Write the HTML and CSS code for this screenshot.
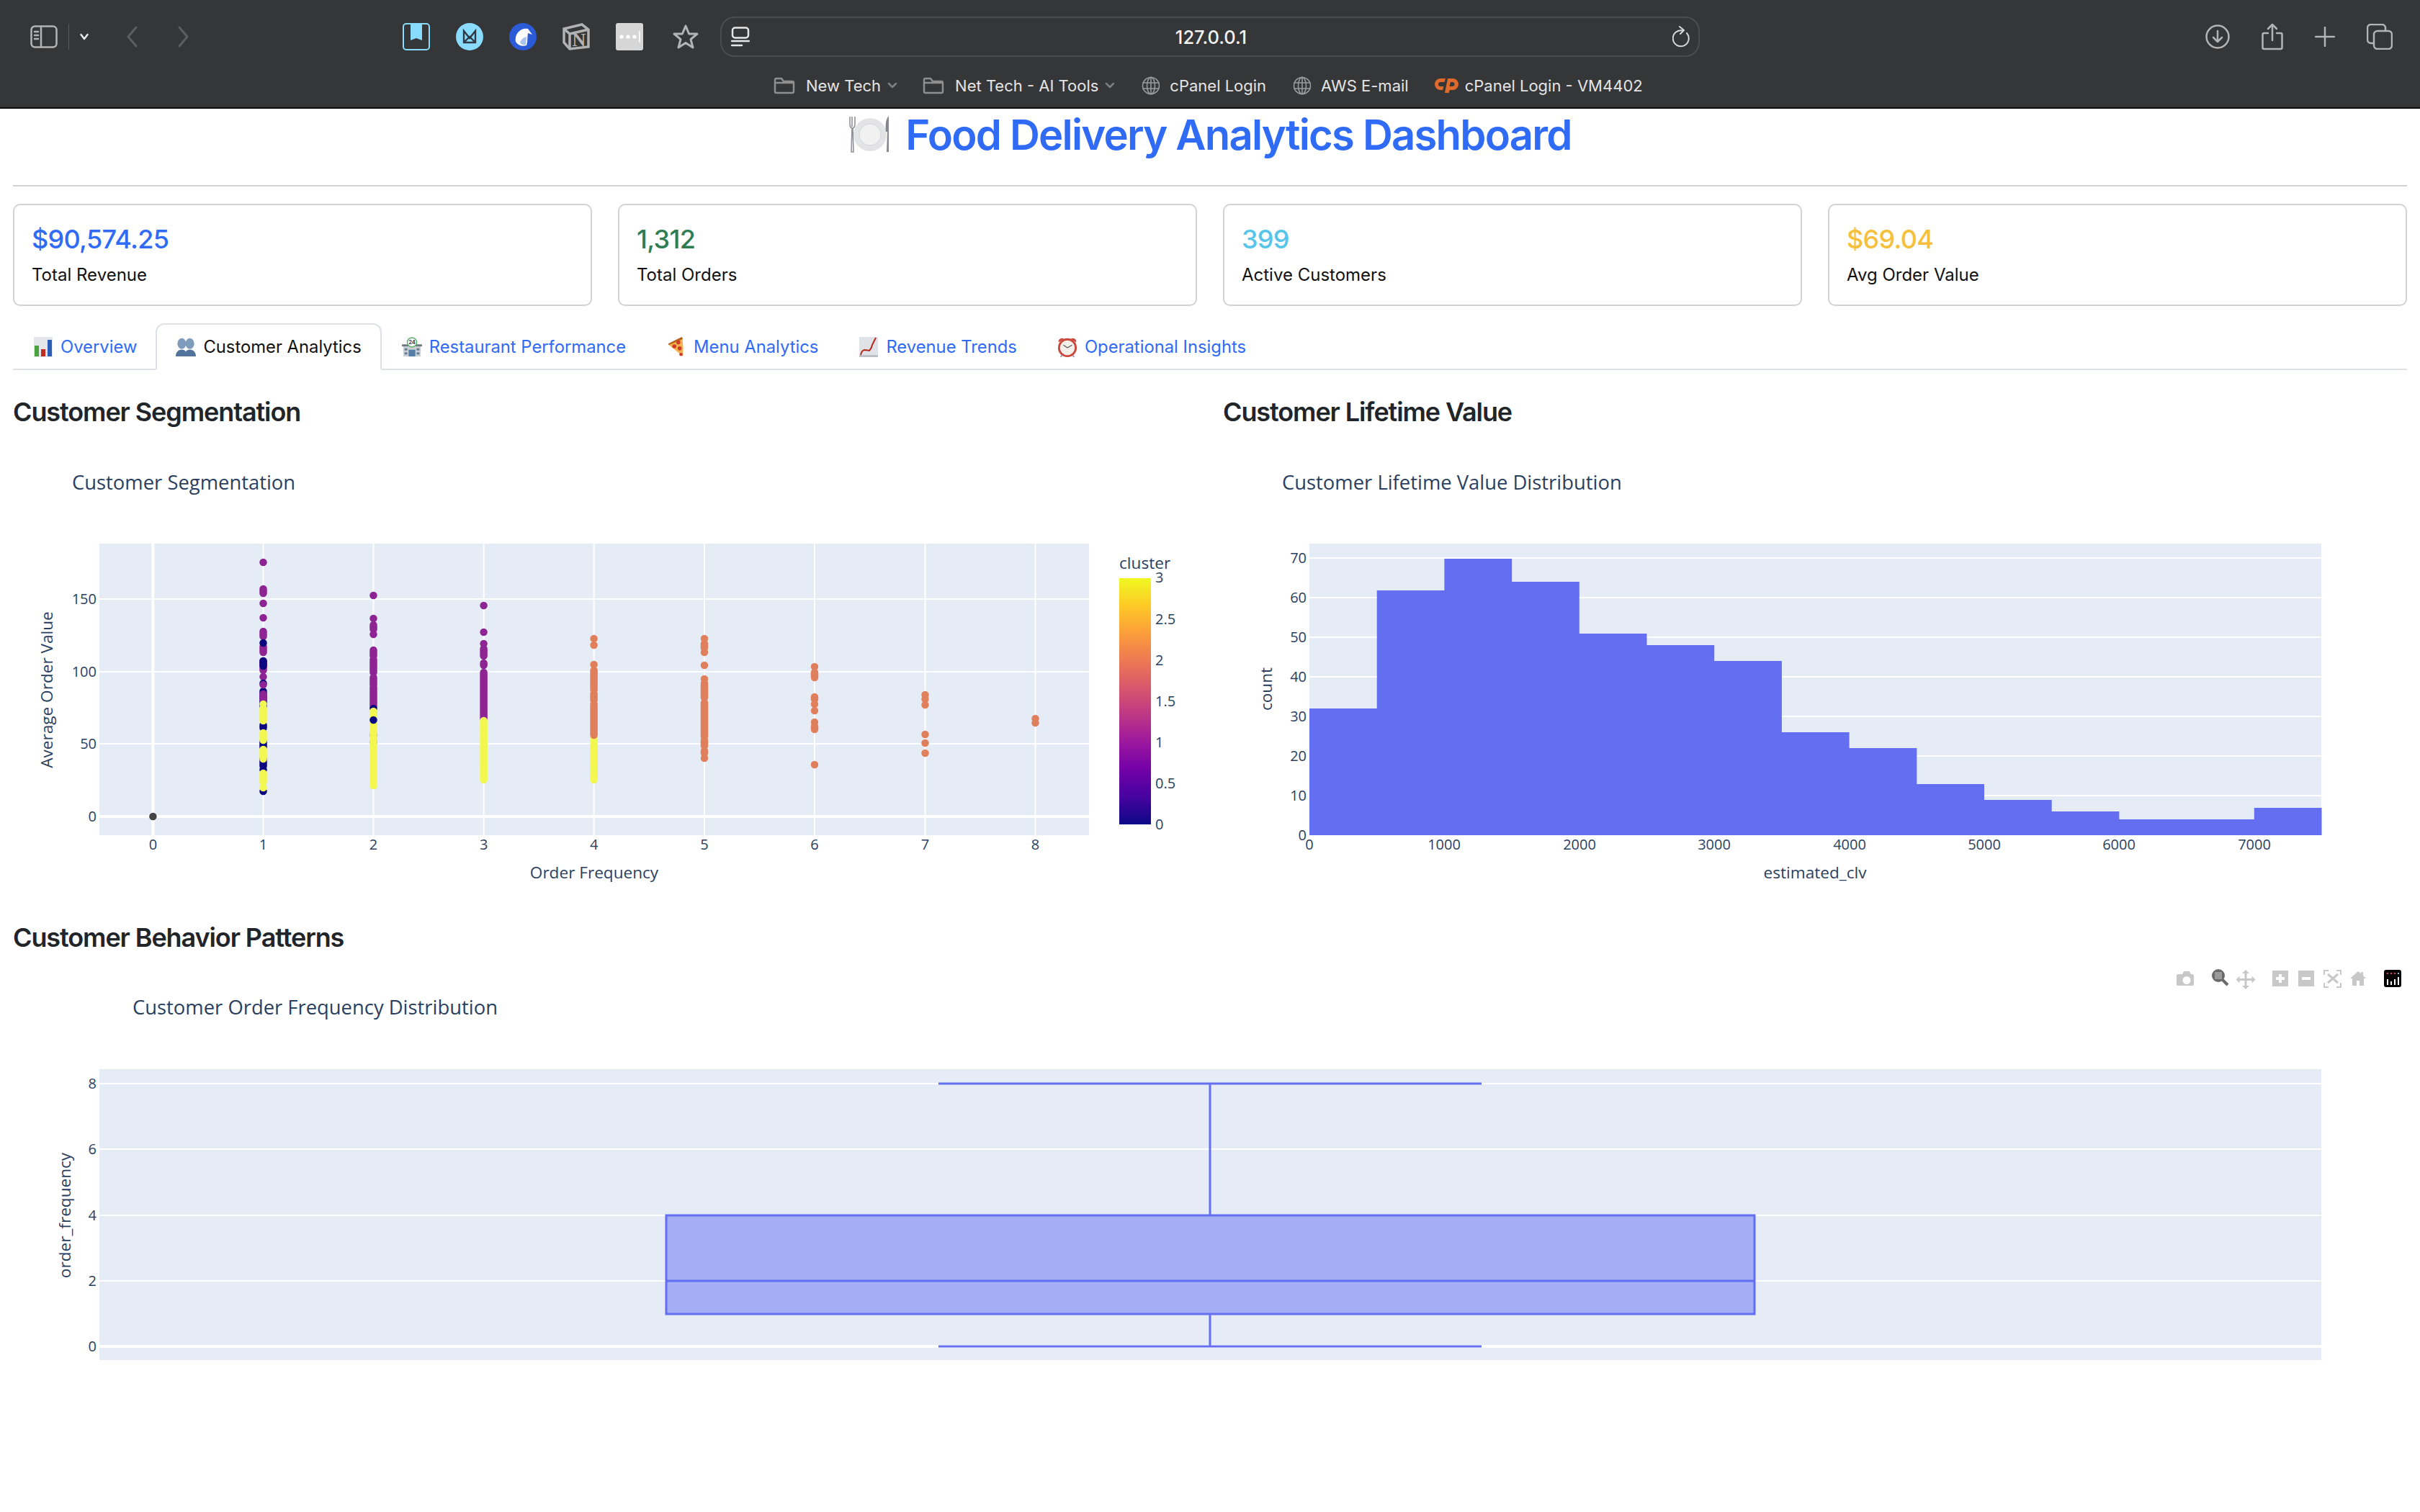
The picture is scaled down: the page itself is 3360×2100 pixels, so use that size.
FILE: index.html

```html
<!DOCTYPE html>
<html lang="en">
<head>
  <meta charset="UTF-8">
  <title>Food Delivery Analytics Dashboard</title>
  <link rel="stylesheet" href="styles.css">
</head>
<body>
  <header class="toolbar">
    <div class="tb-row">
      <div class="tb-left">
        <svg class="ic sidebar-ic" width="38" height="32" viewBox="0 0 38 32"><rect x="1.5" y="1.5" width="35" height="29" rx="5"/><path d="M15 2v28M6 9h5M6 14h5M6 19h5"/></svg>
        <span class="tb-divider"></span>
        <svg class="ic chev-down" width="12" height="10" viewBox="0 0 12 10"><path d="M1.5 2 6 8l4.5-6"/></svg>
        <svg class="ic nav-back" width="16" height="30" viewBox="0 0 16 30"><path d="M14 2 3 15l11 13"/></svg>
        <svg class="ic nav-fwd" width="16" height="30" viewBox="0 0 16 30"><path d="m2 2 11 13L2 28"/></svg>
        <svg class="ext ext-first" width="38" height="38" viewBox="0 0 38 38"><rect x="1" y="1" width="36" height="36" rx="4" fill="none" stroke="#8adcff" stroke-width="2"/><path d="M11 1h16v23l-8-3-8 3z" fill="#8adcff"/></svg>
        <svg class="ext" width="38" height="38" viewBox="0 0 38 38"><circle cx="19" cy="19" r="19" fill="#8adcff"/><path d="M11 11v16h16V11L19 21z M11 27l8-8 8 8" fill="none" stroke="#2f3a46" stroke-width="2.4"/></svg>
        <svg class="ext" width="38" height="38" viewBox="0 0 38 38"><circle cx="19" cy="19" r="19" fill="#2c5bd8"/><path d="M9 26C7 14 17 6 26 8l6 8-6-2c-1 6 0 11-2 17-6 2-12 0-15-5z" fill="#fff"/><path d="M15 27c2-5 5-7 9-8l-1 11c-3 1-6 0-8-3z" fill="#a9c3ee"/></svg>
        <svg class="ext" width="38" height="38" viewBox="0 0 38 38"><path d="M2 8 27 2l9 7v24l-26 3-8-9z" fill="none" stroke="#b2b2b2" stroke-width="3.500"/><path d="M2 8l8 7 26-6M10 15v21" fill="none" stroke="#b2b2b2" stroke-width="3.500"/><text class="notion-n" x="23" y="32" text-anchor="middle">N</text></svg>
        <svg class="ext" width="38" height="38" viewBox="0 0 38 38"><rect width="38" height="38" rx="3" fill="#d6d6d6"/><circle cx="8" cy="19" r="2.6" fill="#fff"/><circle cx="17" cy="19" r="2.6" fill="#fff"/><circle cx="26" cy="19" r="2.6" fill="#fff"/><rect x="32" y="11" width="1.6" height="16" fill="#fff"/></svg>
        <svg class="ic star-ic" width="38" height="36" viewBox="0 0 38 36"><path d="m19 3 4.6 11H35l-9 7.6L29 33l-10-6.500L9 33l3-11.400L3 14h11.400z"/></svg>
      </div>
      <div class="urlbar">
        <svg class="ic site-ic" width="26" height="28" viewBox="0 0 26 28"><rect x="2" y="1.500" width="22" height="14" rx="3.500"/><path d="M1 20h24M1 26h14"/></svg>
        <span class="url-text">127.0.0.1</span>
        <svg class="ic reload-ic" width="26" height="30" viewBox="0 0 26 30"><path d="M20 10a11 11 0 1 1-6-3.500M10 1l6 5-5 5"/></svg>
      </div>
      <div class="tb-right">
        <svg class="ic" width="34" height="34" viewBox="0 0 34 34"><circle cx="17" cy="17" r="15.500"/><path d="M17 9v15M11 18l6 6 6-6"/></svg>
        <svg class="ic share-ic" width="30" height="38" viewBox="0 0 30 38"><path d="M9 14H3.500a2 2 0 0 0-2 2v18a2 2 0 0 0 2 2h23a2 2 0 0 0 2-2V16a2 2 0 0 0-2-2H21M15 24V2M9 8l6-6 6 6"/></svg>
        <svg class="ic plus-ic" width="28" height="28" viewBox="0 0 28 28"><path d="M14 1v26M1 14h26"/></svg>
        <svg class="ic tabs-ic" width="36" height="36" viewBox="0 0 36 36"><rect x="10" y="10" width="25" height="25" rx="5"/><path d="M10 27H6a5 5 0 0 1-5-5V6a5 5 0 0 1 5-5h15a5 5 0 0 1 5 5v4"/></svg>
      </div>
    </div>
    <div class="tb-row bm-row">
      <svg class="apps-ic" width="23" height="18" viewBox="0 0 23 18"><path d="M2 2h0M8.300 2h0M14.600 2h0M21 2h0M2 9h0M8.300 9h0M14.600 9h0M21 9h0M2 16h0M8.300 16h0M14.600 16h0M21 16h0"/></svg>
      <nav class="bookmarks">
        <a class="bm bm-folder bm-first"><svg class="ic" width="30" height="24" viewBox="0 0 30 24"><path d="M2 7V4a2 2 0 0 1 2-2h7l3 4h12a2 2 0 0 1 2 2v12a2 2 0 0 1-2 2H4a2 2 0 0 1-2-2zM2 8h26"/></svg>New Tech<svg class="ic bm-chev" width="14" height="8" viewBox="0 0 14 8"><path d="m2 1 5 5 5-5"/></svg></a>
        <a class="bm bm-folder"><svg class="ic" width="30" height="24" viewBox="0 0 30 24"><path d="M2 7V4a2 2 0 0 1 2-2h7l3 4h12a2 2 0 0 1 2 2v12a2 2 0 0 1-2 2H4a2 2 0 0 1-2-2zM2 8h26"/></svg>Net Tech - AI Tools<svg class="ic bm-chev" width="14" height="8" viewBox="0 0 14 8"><path d="m2 1 5 5 5-5"/></svg></a>
        <a class="bm"><svg class="ic globe-ic" width="26" height="26" viewBox="0 0 26 26"><circle cx="13" cy="13" r="11.500"/><ellipse cx="13" cy="13" rx="5.500" ry="11.500"/><path d="M2 9h22M2 17h22M13 1v24"/></svg>cPanel Login</a>
        <a class="bm"><svg class="ic globe-ic" width="26" height="26" viewBox="0 0 26 26"><circle cx="13" cy="13" r="11.500"/><ellipse cx="13" cy="13" rx="5.500" ry="11.500"/><path d="M2 9h22M2 17h22M13 1v24"/></svg>AWS E-mail</a>
        <a class="bm bm-cp"><svg width="34" height="24" viewBox="0 0 34 24"><path d="M16 2H9a8 8 0 0 0 0 16h3l1.500-5H9a3 3 0 0 1 0-6h5.500zM19 2h7a8 8 0 0 1 0 16h-4l-1.500 4H15zm4 5-1.500 6h4a3 3 0 0 0 0-6z" fill="#de6a2b" fill-rule="evenodd"/></svg>cPanel Login - VM4402</a>
      </nav>
    </div>
  </header>

  <main class="page">
    <h1 class="page-title">
      <svg width="60" height="54" viewBox="0 0 60 54"><circle cx="30" cy="27" r="23" fill="#e4e4e6"/><circle cx="30" cy="27" r="15" fill="#f1f1f2" stroke="#d2d5da"/><path d="M5 2v14M2 2v10q0 5 3 6l-1 33h3l-1-33q3-1 3-6V2" fill="none" stroke="#8f9296" stroke-width="1.600"/><path d="M56 1c-4 4-5 12-4 22h2l-1 28h3z" fill="#85888c"/></svg>
      <span>Food Delivery Analytics Dashboard</span>
    </h1>
    <hr class="rule">

    <section class="cards">
      <div class="card"><div class="card-value text-blue">$90,574.25</div><div class="card-label">Total Revenue</div></div>
      <div class="card"><div class="card-value text-green">1,312</div><div class="card-label">Total Orders</div></div>
      <div class="card"><div class="card-value text-cyan">399</div><div class="card-label">Active Customers</div></div>
      <div class="card"><div class="card-value text-yellow">$69.04</div><div class="card-label">Avg Order Value</div></div>
    </section>

    <ul class="tabs">
      <li class="tab tab-first">
        <svg class="emoji" viewBox="0 0 26 30"><rect y="1" width="26" height="28" fill="#e4e6ea"/><rect x="1" y="13" width="6" height="15" fill="#4ba23f"/><rect x="10" y="18" width="6" height="10" fill="#c22b20"/><rect x="19" y="5" width="6" height="23" fill="#2a5fb5"/></svg>
        Overview
      </li>
      <li class="tab active">
        <svg class="emoji" viewBox="0 0 30 30"><g fill="#7f9cbd"><ellipse cx="9" cy="10" rx="6.500" ry="8"/><ellipse cx="21" cy="10" rx="6.500" ry="8"/></g><path d="M0 29c0-6 3-9 7-10h4c3 1 4 2 4 4 0-2 1-3 4-4h4c4 1 7 4 7 10z" fill="#52749c"/></svg>
        Customer Analytics
      </li>
      <li class="tab">
        <svg class="emoji" viewBox="0 0 30 30"><rect x="2" y="13" width="26" height="16" fill="#c9cfd3"/><rect x="0" y="11" width="30" height="3" fill="#6f7a80"/><rect x="10" y="19" width="10" height="10" fill="#557fa8"/><rect x="4" y="17" width="4" height="3" fill="#5d7a92"/><rect x="22" y="17" width="4" height="3" fill="#5d7a92"/><rect x="4" y="23" width="4" height="3" fill="#5d7a92"/><rect x="22" y="23" width="4" height="3" fill="#5d7a92"/><circle cx="15" cy="8" r="7" fill="#fff" stroke="#5cb06a" stroke-width="1.600"/><text class="em-24" x="15" y="11" text-anchor="middle">24</text></svg>
        Restaurant Performance
      </li>
      <li class="tab">
        <svg class="emoji" viewBox="0 0 30 30"><path d="M3 11 24 1q2 14 1 28z" fill="#f2b44c"/><path d="M23 0 3 10l1 2L25 3z" fill="#b5651d"/><circle cx="18" cy="8" r="3" fill="#d3392b"/><circle cx="12" cy="14" r="3" fill="#d3392b"/><circle cx="20" cy="17" r="3" fill="#d3392b"/><circle cx="22" cy="26" r="2.500" fill="#d3392b"/></svg>
        Menu Analytics
      </li>
      <li class="tab">
        <svg class="emoji" viewBox="0 0 26 30"><rect y="1" width="26" height="28" fill="#dfe3e8"/><rect y="26" width="26" height="3" fill="#bcc0c5"/><path d="M2 26c1-5 3-7 6-7l6 1q3-3 4-8l5-10" fill="none" stroke="#b8281d" stroke-width="2"/></svg>
        Revenue Trends
      </li>
      <li class="tab">
        <svg class="emoji" viewBox="0 0 30 30"><path d="M2 8a5 5 0 0 1 8-5zM28 8a5 5 0 0 0-8-5z" fill="#c9473d"/><circle cx="15" cy="16" r="12.500" fill="#f4efe8" stroke="#c9473d" stroke-width="3"/><path d="M15 16 9 12M15 16l7-4" stroke="#555" stroke-width="1.300"/><path d="m7 27-2 3M23 27l2 3" stroke="#999" stroke-width="2"/></svg>
        Operational Insights
      </li>
    </ul>

    <section class="chart-row">
      <div class="chart-col">
        <h4 class="section-title">Customer Segmentation</h4>
        <svg class="chart" viewBox="18 610 1644 640" width="1644" height="640">
          <defs>
            <linearGradient id="plasma" x1="0" y1="1" x2="0" y2="0">
              <stop offset="0" stop-color="#0d0887"/><stop offset=".111" stop-color="#46039f"/><stop offset=".222" stop-color="#7201a8"/><stop offset=".333" stop-color="#9c179e"/><stop offset=".444" stop-color="#bd3786"/><stop offset=".556" stop-color="#d8576b"/><stop offset=".667" stop-color="#ed7953"/><stop offset=".778" stop-color="#fb9f3a"/><stop offset=".889" stop-color="#fdca26"/><stop offset="1" stop-color="#f0f921"/>
            </linearGradient>
          </defs>
          <text class="plot-title" x="100" y="679">Customer Segmentation</text>
          <rect class="plot-bg" x="138" y="754" width="1374" height="405"/>
          <path class="grid" d="M138 831h1374M138 932h1374M138 1032h1374M365.500 754v405M518.500 754v405M671.600 754v405M824.600 754v405M978 754v405M1131 754v405M1284.500 754v405M1437.500 754v405"/>
          <path class="grid zero" d="M138 1133h1374M212.400 754v405"/>
          <path class="pts pts-purple" d="M365.500 780v0M365.500 817v6M365.500 837v0M365.500 857v0M365.500 876v7M365.500 897v8M365.500 917v13M365.500 939v0M518.500 826v0M518.500 858v0M518.500 867v6M518.500 880v0M518.500 902v8M518.500 915v18M518.500 940v10M518.500 953v27M671.600 840v0M671.600 877v0M671.600 893v0M671.600 900v10M671.600 920v3M671.600 933v64"/>
          <path class="pts pts-navy" d="M365.500 892v0M365.500 917v7M365.500 948v0M365.500 959v21M365.500 1006v4M365.500 1029v8M365.500 1053v10M365.500 1068v0M365.500 1098v0M518.500 983v0M518.500 1020v0M518.500 1030v0"/>
          <path class="pts pts-purple" d="M365.500 950v0M365.500 963v8"/>
          <path class="pts pts-yellow" d="M365.500 977v0M365.500 982v18M365.500 1017v10M365.500 1040v13M365.500 1073v12M365.500 1093v0M518.500 987v33M518.500 1020v50M518.500 1073v17M671.600 1000v82M824.600 1023v39M824.600 1067v15"/>
          <path class="pts pts-navy" d="M518.500 999v0"/>
          <path class="pts pts-orange" d="M824.600 886v0M824.600 895v0M824.600 922v0M824.600 930v27M824.600 962v10M824.600 977v43M978 886v0M978 893v6M978 905v0M978 923v0M978 942v0M978 948v20M978 975v47M978 1027v8M978 1042v3M978 1052v0M1131 925v0M1131 933v7M1131 967v3M1131 977v0M1131 986v0M1131 1002v0M1131 1008v4M1131 1061v0M1284.500 964v0M1284.500 970v0M1284.500 978v0M1284.500 1019v0M1284.500 1031v0M1284.500 1045v0M1437.500 997v0M1437.500 1003v0"/>
          <path class="pts pts-dark" d="M212.400 1133v0"/>
          <g class="tick end">
            <text x="134" y="838">150</text><text x="134" y="939">100</text><text x="134" y="1039">50</text><text x="134" y="1140">0</text>
          </g>
          <g class="tick mid">
            <text x="212.400" y="1179">0</text><text x="365.500" y="1179">1</text><text x="518.500" y="1179">2</text><text x="671.600" y="1179">3</text><text x="824.600" y="1179">4</text><text x="978" y="1179">5</text><text x="1131" y="1179">6</text><text x="1284.500" y="1179">7</text><text x="1437.500" y="1179">8</text>
          </g>
          <text class="axis-title" x="825" y="1219" text-anchor="middle">Order Frequency</text>
          <text class="axis-title" transform="translate(73 957) rotate(-90)" text-anchor="middle">Average Order Value</text>
          <text class="axis-title" x="1554" y="789">cluster</text>
          <rect x="1554" y="802" width="44" height="342" fill="url(#plasma)"/>
          <g class="tick">
            <text x="1604" y="808">3</text><text x="1604" y="866">2.5</text><text x="1604" y="923">2</text><text x="1604" y="980">1.5</text><text x="1604" y="1037">1</text><text x="1604" y="1094">0.5</text><text x="1604" y="1151">0</text>
          </g>
        </svg>
      </div>
      <div class="chart-col">
        <h4 class="section-title">Customer Lifetime Value</h4>
        <svg class="chart" viewBox="1698 610 1644 640" width="1644" height="640">
          <text class="plot-title" x="1780" y="679">Customer Lifetime Value Distribution</text>
          <rect class="plot-bg" x="1818" y="754" width="1405" height="405"/>
          <path class="grid" d="M1818 774h1405M1818 829h1405M1818 884h1405M1818 939h1405M1818 994h1405M1818 1049h1405M1818 1104h1405"/>
          <path class="bars" d="M1818 1159V983h93.700V819h93.700V775h93.700V807h93.700V879h93.700V895h93.700V917h93.700V1016h93.700V1038h93.700V1088h93.700V1110h93.700V1126h93.700V1137h93.700V1137h93.700V1121h93.700V1159z"/>
          <g class="tick end">
            <text x="1814" y="781">70</text><text x="1814" y="836">60</text><text x="1814" y="891">50</text><text x="1814" y="946">40</text><text x="1814" y="1001">30</text><text x="1814" y="1056">20</text><text x="1814" y="1111">10</text><text x="1814" y="1166">0</text>
          </g>
          <g class="tick mid">
            <text x="1818" y="1179">0</text><text x="2005" y="1179">1000</text><text x="2193" y="1179">2000</text><text x="2380" y="1179">3000</text><text x="2568" y="1179">4000</text><text x="2755" y="1179">5000</text><text x="2942" y="1179">6000</text><text x="3130" y="1179">7000</text>
          </g>
          <text class="axis-title" x="2520" y="1219" text-anchor="middle">estimated_clv</text>
          <text class="axis-title" transform="translate(1766 956) rotate(-90)" text-anchor="middle">count</text>
        </svg>
      </div>
    </section>

    <h4 class="section-title section-gap">Customer Behavior Patterns</h4>
    <svg class="chart" viewBox="18 1330 3324 600" width="3324" height="600">
      <text class="plot-title" x="184" y="1408">Customer Order Frequency Distribution</text>
      <rect class="plot-bg" x="138" y="1484" width="3085" height="404"/>
      <path class="grid" d="M138 1504h3085M138 1595h3085M138 1687h3085M138 1778h3085"/>
      <path class="grid zero" d="M138 1869h3085"/>
      <rect class="box-fill" x="925" y="1687" width="1511" height="137"/>
      <path class="box-line" d="M925 1687h1511v137H925zM925 1778h1511M1680 1687V1504M1680 1824v45M1303 1504h754M1303 1869h754"/>
      <g class="tick end">
        <text x="134" y="1511">8</text><text x="134" y="1602">6</text><text x="134" y="1694">4</text><text x="134" y="1785">2</text><text x="134" y="1876">0</text>
      </g>
      <text class="axis-title" transform="translate(98 1687) rotate(-90)" text-anchor="middle">order_frequency</text>
      <!-- modebar -->
      <g fill="#c8c8c8">
        <path fill-rule="evenodd" d="M3026 1352h4l2-4h8l2 4h2a2 2 0 0 1 2 2v12a2 2 0 0 1-2 2h-20a2 2 0 0 1-2-2v-12a2 2 0 0 1 2-2zm10 3a5.500 5.500 0 1 0 0 11 5.500 5.500 0 0 0 0-11z"/>
        <path d="M3118 1346l5 5h-3.500v7h7v-3.500l5 5-5 5v-3.500h-7v7h3.500l-5 5-5-5h3.500v-7h-7v3.500l-5-5 5-5v3.500h7v-7h-3.500z"/>
        <path fill-rule="evenodd" d="M3155 1347h22v22h-22zm9 5v4h-4v4h4v4h4v-4h4v-4h-4v-4z"/>
        <path fill-rule="evenodd" d="M3191 1347h22v22h-22zm5 9v4h12v-4z"/>
        <path d="M3263 1358l11-10 4 3v-2h3v5l4 4h-3v10h-6v-7h-4v7h-6v-10z"/>
      </g>
      <g fill="none" stroke="#c8c8c8" stroke-width="2">
        <path d="M3227 1353v-6h6M3244 1347h6v6M3250 1364v6h-6M3233 1370h-6v-6"/>
        <path d="m3232 1352 14 12m0-12-14 12" stroke-width="3"/>
      </g>
      <circle cx="3080" cy="1354" r="9" fill="#6a6a6a"/>
      <rect x="3075" y="1349" width="10" height="10" fill="#9a9a9a"/>
      <path d="m3086 1360 7 7" stroke="#6a6a6a" stroke-width="4"/>
      <rect x="3310" y="1346" width="24" height="24" rx="3" fill="#000"/>
      <path d="M3315 1359v8M3320 1362v5M3325 1359v8M3330 1356v11" stroke="#fff" stroke-width="2"/>
      <path d="M3314 1351h2M3319 1351h2M3324 1351h2" stroke="#e0416c" stroke-width="2"/>
      <path d="M3329 1351h2" stroke="#5fc3e8" stroke-width="2"/>
    </svg>
  </main>
</body>
</html>
```

FILE: styles.css

```css
* {
  box-sizing: border-box;
}

body {
  margin: 0;
  background: #fff;
  font-family: Inter, "Liberation Sans", sans-serif;
  color: #111;
}

/* browser chrome */
.toolbar {
  height: 151px;
  background: #353638;
  border-bottom: 2px solid #0c0c0c;
}

.tb-row {
  display: flex;
  align-items: center;
  height: 102px;
}

.tb-left {
  display: flex;
  align-items: center;
  width: 1000px;
  padding-left: 42px;
}

.ic {
  flex: none;
  fill: none;
  stroke: #b4b4b4;
  stroke-width: 2.5;
  stroke-linecap: round;
  stroke-linejoin: round;
}

.tb-divider {
  width: 1px;
  height: 36px;
  margin-left: 15px;
  background: #58595b;
}

.chev-down {
  margin-left: 15px;
  stroke: #e8e8e8;
}

.nav-back {
  margin-left: 52px;
  stroke: #5d5e60;
  stroke-width: 3;
}

.nav-fwd {
  margin-left: 56px;
  stroke: #5d5e60;
  stroke-width: 3;
}

.ext {
  flex: none;
  margin-left: 36px;
}

.ext-first {
  margin-left: 296px;
}

.notion-n {
  font-family: "Liberation Serif", serif;
  font-weight: 700;
  font-size: 26px;
  fill: #b2b2b2;
}

.star-ic {
  margin-left: 40px;
  stroke-width: 3;
}

.urlbar {
  display: flex;
  align-items: center;
  justify-content: space-between;
  width: 1360px;
  height: 56px;
  padding: 0 10px 0 13px;
  border: 2px solid #4b4c4e;
  border-radius: 20px;
}

.url-text {
  font-size: 25.500px;
  font-weight: 500;
  color: #f2f2f2;
}

.site-ic {
  stroke: #e6e6e6;
}

.reload-ic {
  stroke: #d8d8d8;
  stroke-width: 2;
}

.tb-right {
  display: flex;
  flex: 1;
  align-items: center;
  justify-content: flex-end;
  gap: 44px;
  padding-right: 38px;
}

.bm-row {
  height: 48px;
  margin-top: -7px;
  padding-left: 34px;
}

.apps-ic {
  flex: none;
  fill: none;
  stroke: #9c9c9c;
  stroke-width: 4;
}

.bookmarks {
  display: flex;
  align-items: center;
  gap: 37px;
  margin-left: 1017px;
  font-size: 22px;
  color: #e4e4e4;
}

.bm {
  display: flex;
  align-items: center;
  gap: 13px;
}

.bm-folder {
  gap: 15px;
}

.bm-first {
  margin-right: -2px;
}

.bm-folder .ic {
  stroke: #8f8f8f;
}

.bm-folder .bm-chev {
  margin-left: -6px;
  stroke: #7f7f7f;
}

.bm-cp {
  gap: 9px;
  margin-left: -2px;
}

.globe-ic {
  stroke: #9a9a9a;
  stroke-width: 1.6;
}

/* page */
.page {
  padding: 0 18px;
}

.page-title {
  display: flex;
  align-items: center;
  justify-content: center;
  gap: 19px;
  height: 72px;
  margin: 0;
  font-size: 58px;
  font-weight: 600;
  letter-spacing: -1.800px;
  color: #2f6bf5;
}

.rule {
  height: 2px;
  margin: 34px 0 24px;
  border: 0;
  background: #d4d4d4;
}

.cards {
  display: grid;
  grid-template-columns: repeat(4, 1fr);
  gap: 36px;
}

.card {
  height: 142px;
  padding: 26px 24px;
  border: 2px solid #d2d2d2;
  border-radius: 10px;
}

.card-value {
  font-size: 36px;
  font-weight: 500;
  line-height: 43px;
  letter-spacing: -0.700px;
}

.card-label {
  margin-top: 10px;
  font-size: 24px;
  line-height: 36px;
}

.text-blue { color: #2f6bf5; }
.text-green { color: #2f7d53; }
.text-cyan { color: #56c5e9; }
.text-yellow { color: #f7c03c; }

.tabs {
  display: flex;
  height: 65px;
  margin: 24px 0 0;
  padding: 0;
  list-style: none;
  border-bottom: 2px solid #dee2e6;
}

.tab {
  display: flex;
  align-items: center;
  gap: 10px;
  height: 65px;
  padding: 0 26px;
  border: 2px solid transparent;
  border-radius: 12px 12px 0 0;
  font-size: 23.800px;
  color: #2f6bf5;
}

.tab-first {
  padding-right: 24px;
}

.tab.active {
  border-color: #dee2e6 #dee2e6 #fff;
  background: #fff;
  color: #111;
}

.emoji {
  flex: none;
  width: 28px;
  height: 30px;
}

.em-24 {
  font-size: 8px;
  font-weight: 700;
  fill: #33415a;
}

.chart-row {
  display: grid;
  grid-template-columns: 1fr 1fr;
  gap: 36px;
}

.section-title {
  height: 43px;
  margin: 37px 0 17px;
  font-size: 36px;
  font-weight: 600;
  line-height: 43px;
  letter-spacing: -1.100px;
  color: #212529;
}

.section-gap {
  margin: 30px 0 7px;
}

.chart {
  display: block;
}

/* plotly bits */
.plot-title {
  font-family: "Open Sans", sans-serif;
  font-size: 27.400px;
  fill: #2a3f5f;
}

.plot-bg {
  fill: #e5ecf6;
}

.grid {
  fill: none;
  stroke: #fff;
  stroke-width: 2;
}

.grid.zero {
  stroke-width: 4;
}

.tick {
  font-family: "Open Sans", sans-serif;
  font-size: 20px;
  fill: #2a3f5f;
}

.tick.end {
  text-anchor: end;
}

.tick.mid {
  text-anchor: middle;
}

.axis-title {
  font-family: "Open Sans", sans-serif;
  font-size: 22.600px;
  fill: #2a3f5f;
}

.pts {
  fill: none;
  stroke-width: 10.500;
  stroke-linecap: round;
}

.pts-purple { stroke: #8e2494; }
.pts-navy { stroke: #0b0780; }
.pts-yellow { stroke: #f2f84f; }
.pts-orange { stroke: #e07f5b; }
.pts-dark { stroke: #444; }

.bars {
  fill: #636ef0;
}

.box-fill {
  fill: #a5adf4;
}

.box-line {
  fill: none;
  stroke: #636ef0;
  stroke-width: 3;
}
```
